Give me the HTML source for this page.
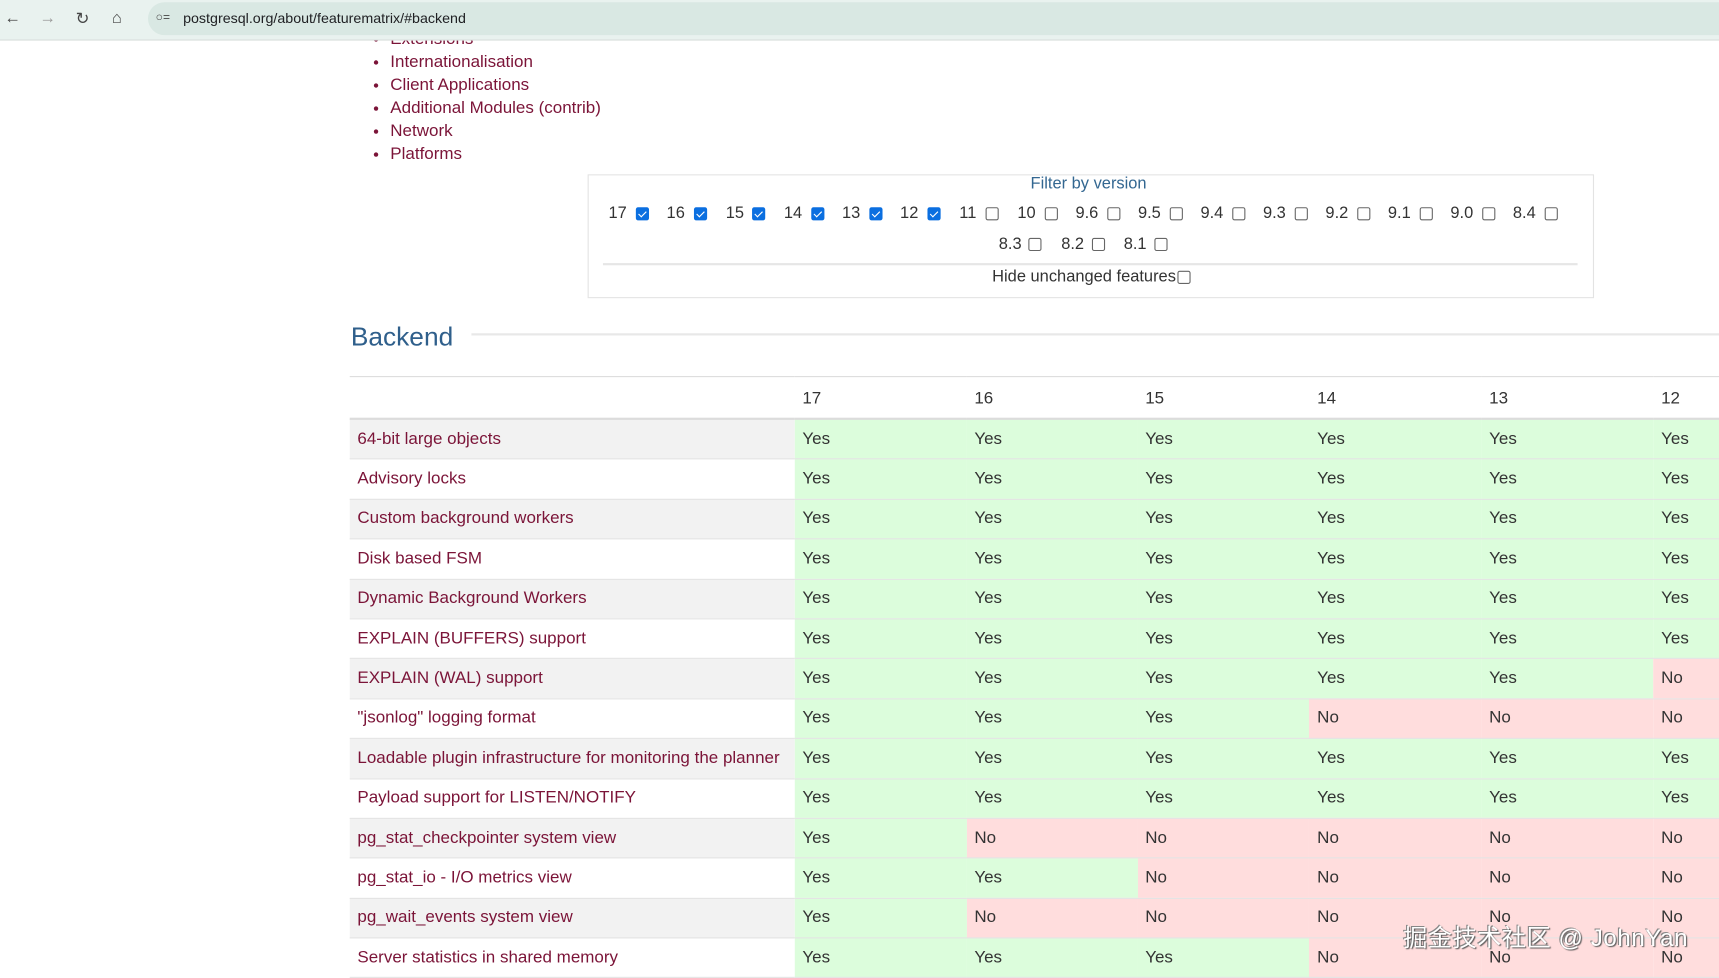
<!DOCTYPE html>
<html><head><meta charset="utf-8"><style>
html,body{margin:0;padding:0;width:1719px;height:974px;overflow:hidden;background:#fff}
#w{position:absolute;left:0;top:0;width:1568px;height:888px;transform:scale(1.09630);transform-origin:0 0;font-family:"Liberation Sans","Noto Sans CJK SC",sans-serif;color:#333}
.bar{position:absolute;left:0;top:0;width:1568px;height:36px;background:#e9f2ef;border-bottom:1px solid #d8dedc;z-index:2}
.pill{position:absolute;left:135px;top:2px;right:0;height:30px;background:#d9e8e3;border-radius:15px 0 0 15px}
.url{position:absolute;left:167px;top:9px;font-size:13px;color:#202124}
.ic{position:absolute;top:8px;font-size:15px;color:#444}
ul{position:absolute;left:320px;top:25px;margin:0;padding-left:36px;list-style:disc}
li{font-size:15.5px;line-height:21px;color:#7b1438}
.box{position:absolute;left:536px;top:159px;width:916px;height:111px;border:1px solid #e3e3e3}
.t{position:absolute;font-size:15px;color:#333;line-height:16px}
.cb{position:absolute;width:10px;height:10px;border:1.3px solid #666;border-radius:2px;background:#fff}
.cb.on{background:#0b6fe0;border-color:#0b6fe0}
.cb.on:after{content:"";position:absolute;left:3px;top:0.5px;width:3px;height:6px;border:solid #fff;border-width:0 1.8px 1.8px 0;transform:rotate(45deg)}
h2{position:absolute;left:320px;top:294px;margin:0;font-size:24px;font-weight:normal;color:#2f5f8b}
.hl{position:absolute;left:430px;top:304px;width:1138px;height:2px;background:#e8e8e8}
table{position:absolute;left:319px;top:343px;border-collapse:collapse;border-top:1px solid #ddd;table-layout:fixed}
td,th{height:35.4px;padding:0 0 0 7px;font-size:15.5px;text-align:left;border-bottom:1px solid #e4e4e4;white-space:nowrap}
th{font-weight:normal;border-bottom:2px solid #dcdcdc;height:35px;padding-top:2px}
td.f{color:#7b1438}
tr:nth-child(even) td.f{background:#f2f2f2}
.y{background:#dcfddc}.n{background:#ffdddd}
.wm{position:absolute;left:1280px;top:838px;font-size:22px;color:#fff;text-shadow:1px 1px 1px #555,-1px -1px 0 #888;letter-spacing:0.5px}
</style></head><body><div id="w">
<div class="bar"><div class="pill"></div>
<span class="ic" style="left:4px">&#8592;</span><span class="ic" style="left:36px;color:#999">&#8594;</span><span class="ic" style="left:69px">&#8635;</span><span class="ic" style="left:102px">&#8962;</span><span class="ic" style="left:142px;font-size:11px;top:10px">&#9675;=</span>
<div class="url">postgresql.org/about/featurematrix/#backend</div></div>
<ul><li>Extensions</li><li>Internationalisation</li><li>Client Applications</li><li>Additional Modules (contrib)</li><li>Network</li><li>Platforms</li></ul>
<div class="box"></div>
<div class="t" style="left:940px;top:160px;color:#336791">Filter by version</div>
<div class="t" style="left:555px;top:187px">17</div><div class="cb on" style="left:580px;top:189px"></div>
<div class="t" style="left:608px;top:187px">16</div><div class="cb on" style="left:633px;top:189px"></div>
<div class="t" style="left:662px;top:187px">15</div><div class="cb on" style="left:686px;top:189px"></div>
<div class="t" style="left:715px;top:187px">14</div><div class="cb on" style="left:740px;top:189px"></div>
<div class="t" style="left:768px;top:187px">13</div><div class="cb on" style="left:793px;top:189px"></div>
<div class="t" style="left:821px;top:187px">12</div><div class="cb on" style="left:846px;top:189px"></div>
<div class="t" style="left:875px;top:187px">11</div><div class="cb" style="left:899px;top:189px"></div>
<div class="t" style="left:928px;top:187px">10</div><div class="cb" style="left:953px;top:189px"></div>
<div class="t" style="left:981px;top:187px">9.6</div><div class="cb" style="left:1010px;top:189px"></div>
<div class="t" style="left:1038px;top:187px">9.5</div><div class="cb" style="left:1067px;top:189px"></div>
<div class="t" style="left:1095px;top:187px">9.4</div><div class="cb" style="left:1124px;top:189px"></div>
<div class="t" style="left:1152px;top:187px">9.3</div><div class="cb" style="left:1181px;top:189px"></div>
<div class="t" style="left:1209px;top:187px">9.2</div><div class="cb" style="left:1238px;top:189px"></div>
<div class="t" style="left:1266px;top:187px">9.1</div><div class="cb" style="left:1295px;top:189px"></div>
<div class="t" style="left:1323px;top:187px">9.0</div><div class="cb" style="left:1352px;top:189px"></div>
<div class="t" style="left:1380px;top:187px">8.4</div><div class="cb" style="left:1409px;top:189px"></div>
<div class="t" style="left:911px;top:215px">8.3</div><div class="cb" style="left:938px;top:217px"></div>
<div class="t" style="left:968px;top:215px">8.2</div><div class="cb" style="left:996px;top:217px"></div>
<div class="t" style="left:1025px;top:215px">8.1</div><div class="cb" style="left:1053px;top:217px"></div>
<div style="position:absolute;left:550px;top:240px;width:889px;height:2px;background:#e6e6e6"></div>
<div class="t" style="left:905px;top:245px">Hide unchanged features</div><div class="cb" style="left:1074px;top:247px"></div>
<h2>Backend</h2><div class="hl"></div>
<table>
<colgroup><col style="width:406px"><col style="width:158px"><col style="width:157px"><col style="width:158px"><col style="width:158px"><col style="width:158px"><col style="width:60px"></colgroup>
<tr><th></th><th>17</th><th>16</th><th>15</th><th>14</th><th>13</th><th>12</th></tr>
<tr><td class="f">64-bit large objects</td><td class="y">Yes</td><td class="y">Yes</td><td class="y">Yes</td><td class="y">Yes</td><td class="y">Yes</td><td class="y">Yes</td></tr>
<tr><td class="f">Advisory locks</td><td class="y">Yes</td><td class="y">Yes</td><td class="y">Yes</td><td class="y">Yes</td><td class="y">Yes</td><td class="y">Yes</td></tr>
<tr><td class="f">Custom background workers</td><td class="y">Yes</td><td class="y">Yes</td><td class="y">Yes</td><td class="y">Yes</td><td class="y">Yes</td><td class="y">Yes</td></tr>
<tr><td class="f">Disk based FSM</td><td class="y">Yes</td><td class="y">Yes</td><td class="y">Yes</td><td class="y">Yes</td><td class="y">Yes</td><td class="y">Yes</td></tr>
<tr><td class="f">Dynamic Background Workers</td><td class="y">Yes</td><td class="y">Yes</td><td class="y">Yes</td><td class="y">Yes</td><td class="y">Yes</td><td class="y">Yes</td></tr>
<tr><td class="f">EXPLAIN (BUFFERS) support</td><td class="y">Yes</td><td class="y">Yes</td><td class="y">Yes</td><td class="y">Yes</td><td class="y">Yes</td><td class="y">Yes</td></tr>
<tr><td class="f">EXPLAIN (WAL) support</td><td class="y">Yes</td><td class="y">Yes</td><td class="y">Yes</td><td class="y">Yes</td><td class="y">Yes</td><td class="n">No</td></tr>
<tr><td class="f">"jsonlog" logging format</td><td class="y">Yes</td><td class="y">Yes</td><td class="y">Yes</td><td class="n">No</td><td class="n">No</td><td class="n">No</td></tr>
<tr><td class="f">Loadable plugin infrastructure for monitoring the planner</td><td class="y">Yes</td><td class="y">Yes</td><td class="y">Yes</td><td class="y">Yes</td><td class="y">Yes</td><td class="y">Yes</td></tr>
<tr><td class="f">Payload support for LISTEN/NOTIFY</td><td class="y">Yes</td><td class="y">Yes</td><td class="y">Yes</td><td class="y">Yes</td><td class="y">Yes</td><td class="y">Yes</td></tr>
<tr><td class="f">pg_stat_checkpointer system view</td><td class="y">Yes</td><td class="n">No</td><td class="n">No</td><td class="n">No</td><td class="n">No</td><td class="n">No</td></tr>
<tr><td class="f">pg_stat_io - I/O metrics view</td><td class="y">Yes</td><td class="y">Yes</td><td class="n">No</td><td class="n">No</td><td class="n">No</td><td class="n">No</td></tr>
<tr><td class="f">pg_wait_events system view</td><td class="y">Yes</td><td class="n">No</td><td class="n">No</td><td class="n">No</td><td class="n">No</td><td class="n">No</td></tr>
<tr><td class="f">Server statistics in shared memory</td><td class="y">Yes</td><td class="y">Yes</td><td class="y">Yes</td><td class="n">No</td><td class="n">No</td><td class="n">No</td></tr>
</table>
<div class="wm">掘金技术社区 @ JohnYan</div>
</div></body></html>
